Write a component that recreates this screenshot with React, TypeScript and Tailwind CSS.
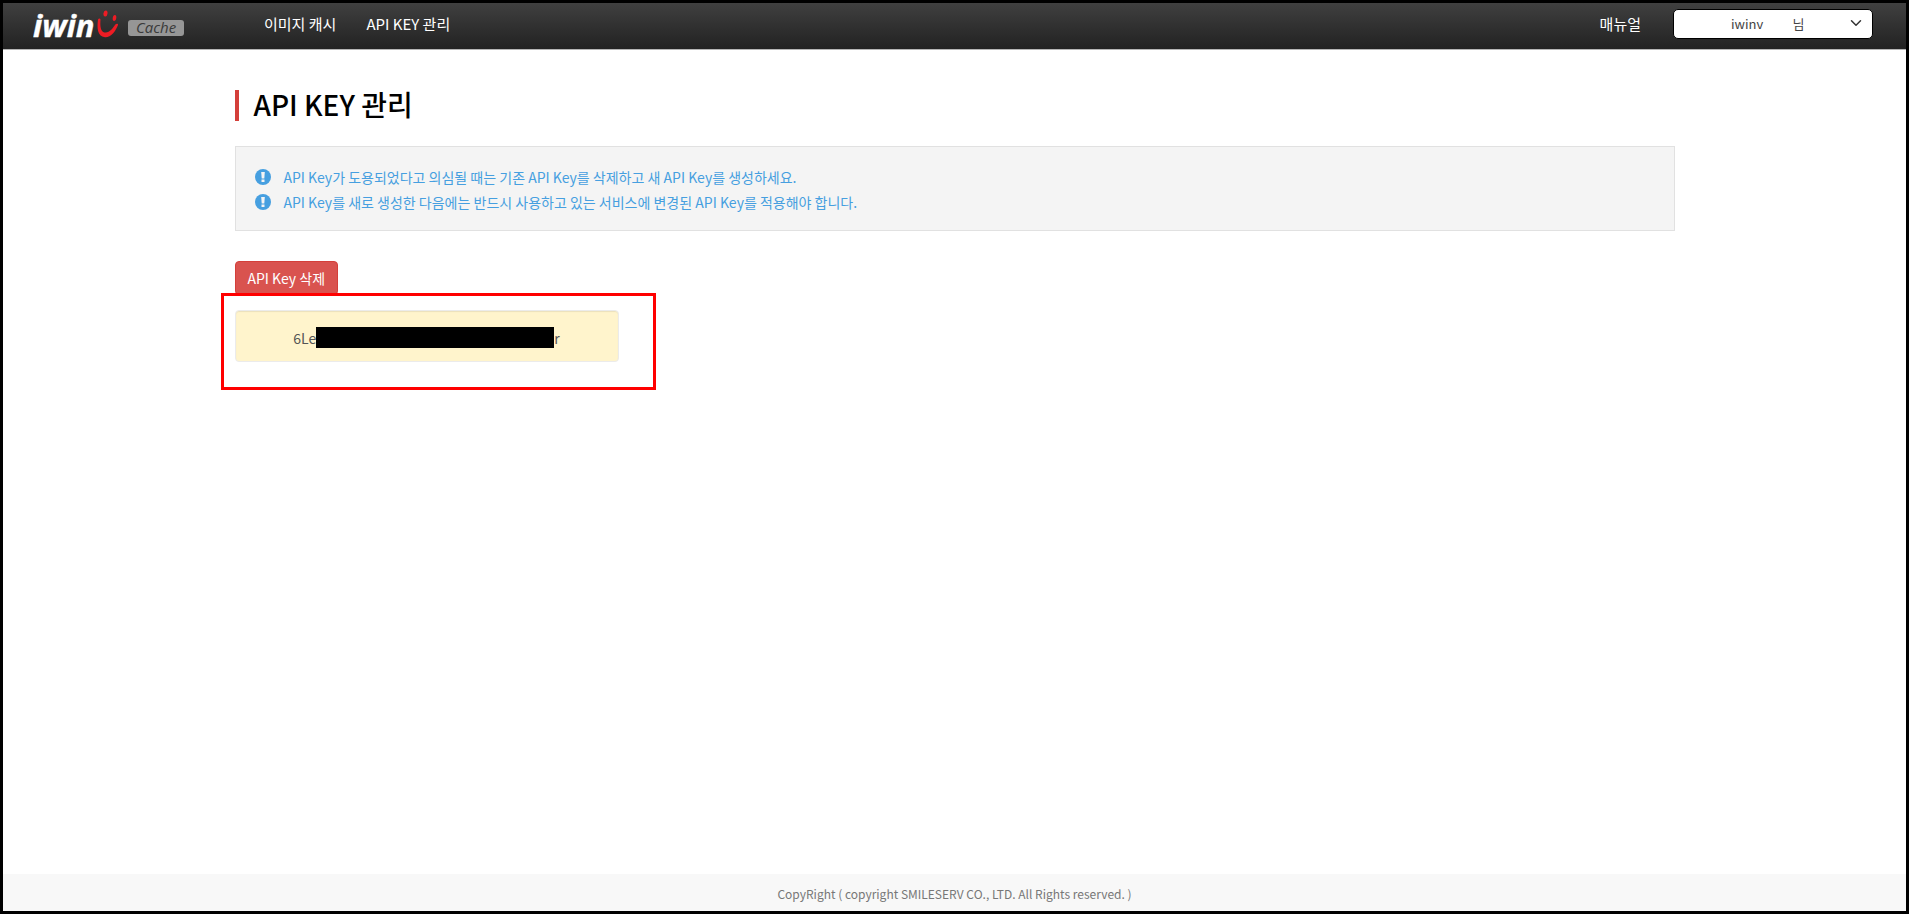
import { ChevronDown } from 'lucide-react';

const notices = [
  'API Key가 도용되었다고 의심될 때는 기존 API Key를 삭제하고 새 API Key를 생성하세요.',
  'API Key를 새로 생성한 다음에는 반드시 사용하고 있는 서비스에 변경된 API Key를 적용해야 합니다.',
];

function Logo() {
  return (
    <a href="#" aria-label="iwinv Cache" className="flex w-[231px] shrink-0 items-center">
      <svg width="156" height="44" viewBox="0 -8 156 44" aria-hidden="true">
        <text
          x="0"
          y="27"
          fill="#fff"
          stroke="#fff"
          strokeWidth="0.4"
          fontSize="31"
          fontWeight="700"
          fontStyle="italic"
          fontFamily="'Open Sans', 'Noto Sans', sans-serif"
        >
          iwin
        </text>
        <ellipse cx="72.5" cy="3.5" rx="2" ry="3" fill="#ed1c24" transform="rotate(8 72.5 3.5)" />
        <ellipse cx="81.5" cy="8" rx="1.8" ry="3" fill="#ed1c24" transform="rotate(8 81.5 8)" />
        <path
          d="M65 9.500C65.700 8.300 67.300 8.300 67.500 9.500C67 16 67.500 21.500 71.500 22.500C76.500 23.300 80 18 82.300 14.600C83.300 13.200 85.500 13.600 85 15C82.500 21.500 78 27.500 72 27.200C64 26.500 64 17 65 9.500Z"
          fill="#ed1c24"
        />
        <rect x="95" y="10" width="56" height="16" rx="3" fill="#969696" />
        <text
          x="123"
          y="23"
          fill="#3a3a3a"
          fontSize="15"
          fontStyle="italic"
          textAnchor="middle"
          fontFamily="'Open Sans', 'Noto Sans', sans-serif"
        >
          Cache
        </text>
      </svg>
    </a>
  );
}

function NoticeIcon() {
  return (
    <svg width="16" height="16" viewBox="0 0 16 16" className="shrink-0" aria-hidden="true">
      <circle cx="8" cy="8" r="8" fill="#469fe0" />
      <path d="M6.200 3h3.600l-.5 6.500H6.700z" fill="#f4f4f4" />
      <rect x="6.500" y="10.500" width="3" height="2.500" fill="#f4f4f4" />
    </svg>
  );
}

export default function App() {
  return (
    <div className="flex min-h-screen flex-col border-[3px] border-black bg-white font-['Noto_Sans_CJK_KR',sans-serif] text-sm text-[#555]">
      <header className="flex h-[47px] items-center border-b border-[#b5b5b5] bg-linear-to-b from-[#404040] to-[#222] pr-[33px] pb-1 pl-[30px]">
        <Logo />
        <nav className="flex flex-1 items-center gap-[30px] text-[15px] text-white">
          <a href="#">이미지 캐시</a>
          <a href="#">API KEY 관리</a>
          <a href="#" className="ml-auto">매뉴얼</a>
        </nav>
        <div className="relative ml-8">
          <select
            aria-label="계정"
            className="block h-[30px] w-[200px] appearance-none rounded-[5px] border border-black bg-white pl-[57px] text-[13px] text-[#444]"
          >
            <option>{'iwinv\u2003\u2003\u2005님'}</option>
          </select>
          <ChevronDown
            className="pointer-events-none absolute top-[5px] right-2 text-[#333]"
            size={18}
            strokeWidth={2}
            aria-hidden="true"
          />
        </div>
      </header>

      <main className="mx-auto w-full max-w-[1440px] flex-1 pt-10">
        <h1 className="flex h-[31px] items-center border-l-4 border-[#d43f3a] pb-1 pl-[15px] text-[28px] font-medium text-black">
          API KEY 관리
        </h1>

        <ul className="mt-[25px] border border-[#e1e1e1] bg-[#f4f4f4] px-[19px] pt-[17px] pb-4 text-[#469fe0]">
          {notices.map((notice) => (
            <li key={notice} className="flex h-[25px] items-center gap-[13px]">
              <NoticeIcon />
              {notice}
            </li>
          ))}
        </ul>

        <button
          type="button"
          className="mt-[30px] block h-[34px] rounded-[4px] border border-[#d43f3a] bg-[#d9534f] px-3 text-sm text-white"
        >
          API Key 삭제
        </button>

        <section
          aria-label="API Key"
          className="relative -mt-[2px] -ml-[14px] h-[97px] w-[435px] border-[3px] border-[#f00] bg-white pt-[14px] pl-[11px]"
        >
          <div className="flex h-[52px] w-[384px] items-center justify-center rounded-[4px] border border-[#ebebeb] bg-[#fff4cc] pt-[3px] text-sm shadow-[inset_0_1px_1px_rgba(0,0,0,0.08)]">
            <span>6Le</span>
            <span className="h-[21px] w-[238px] bg-black" />
            <span>r</span>
          </div>
        </section>
      </main>

      <footer className="flex h-[37px] items-center justify-center bg-[#f8f8f8] pt-[2px] text-xs text-[#777]">
        CopyRight ( copyright SMILESERV CO., LTD. All Rights reserved. )
      </footer>
    </div>
  );
}
